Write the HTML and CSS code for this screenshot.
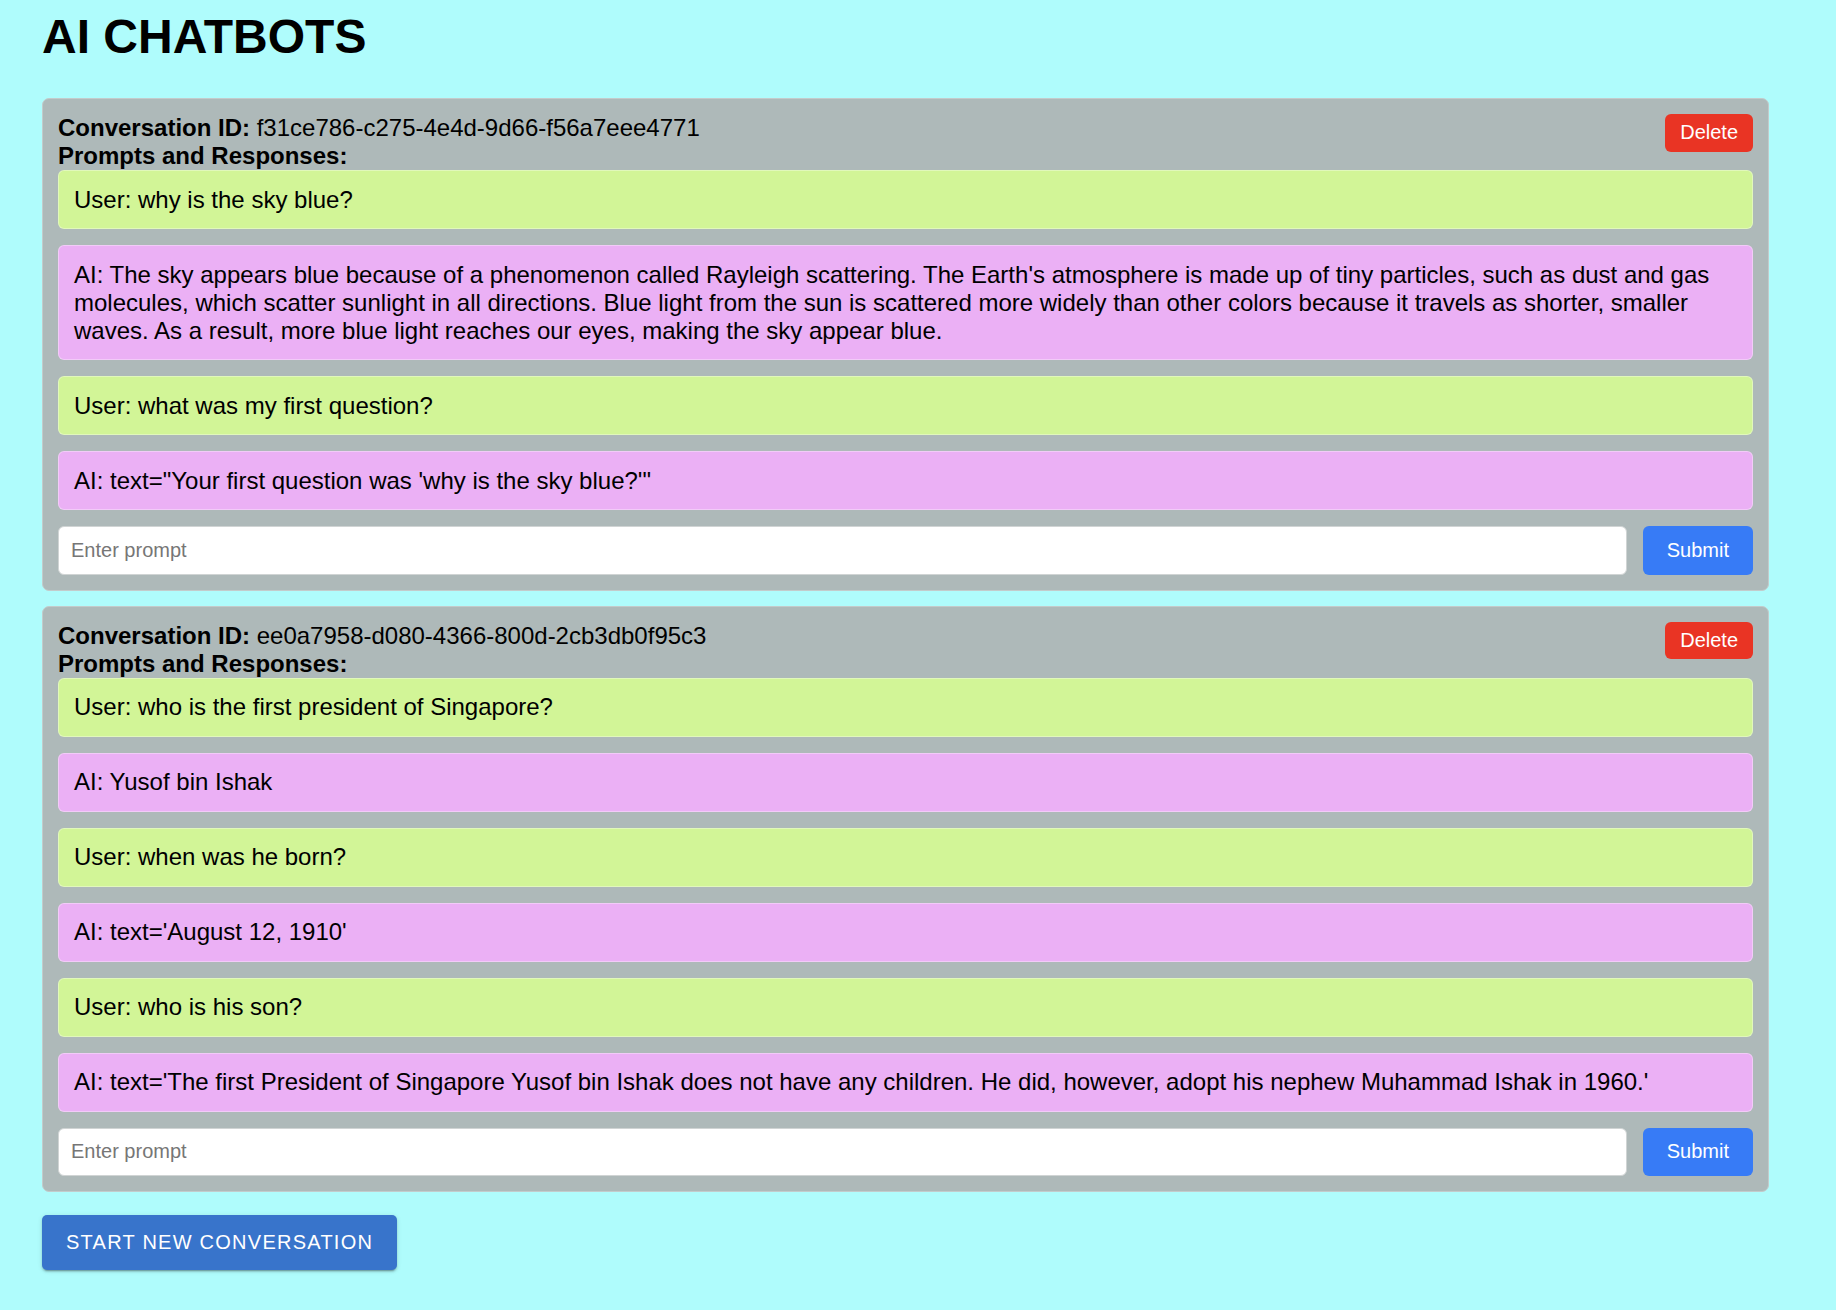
FILE: index.html
```html
<!DOCTYPE html>
<html lang="en">
<head>
<meta charset="utf-8">
<title>AI Chatbots</title>
<link rel="stylesheet" href="styles.css">
</head>
<body>
<main class="page">
  <h1 class="title">AI CHATBOTS</h1>

  <section class="conversation">
    <button class="delete-btn">Delete</button>
    <div class="conv-id"><strong>Conversation ID:</strong> f31ce786-c275-4e4d-9d66-f56a7eee4771</div>
    <div class="conv-label"><strong>Prompts and Responses:</strong></div>
    <div class="messages">
      <div class="msg user">User: why is the sky blue?</div>
      <div class="msg ai">AI: The sky appears blue because of a phenomenon called Rayleigh scattering. The Earth's atmosphere is made up of tiny particles, such as dust and gas molecules, which scatter sunlight in all directions. Blue light from the sun is scattered more widely than other colors because it travels as shorter, smaller waves. As a result, more blue light reaches our eyes, making the sky appear blue.</div>
      <div class="msg user">User: what was my first question?</div>
      <div class="msg ai">AI: text="Your first question was 'why is the sky blue?'"</div>
      <form class="prompt-row">
        <input class="prompt-input" type="text" placeholder="Enter prompt">
        <button class="submit-btn" type="button">Submit</button>
      </form>
    </div>
  </section>

  <section class="conversation">
    <button class="delete-btn">Delete</button>
    <div class="conv-id"><strong>Conversation ID:</strong> ee0a7958-d080-4366-800d-2cb3db0f95c3</div>
    <div class="conv-label"><strong>Prompts and Responses:</strong></div>
    <div class="messages">
      <div class="msg user">User: who is the first president of Singapore?</div>
      <div class="msg ai">AI: Yusof bin Ishak</div>
      <div class="msg user">User: when was he born?</div>
      <div class="msg ai">AI: text='August 12, 1910'</div>
      <div class="msg user">User: who is his son?</div>
      <div class="msg ai">AI: text='The first President of Singapore Yusof bin Ishak does not have any children. He did, however, adopt his nephew Muhammad Ishak in 1960.'</div>
      <form class="prompt-row">
        <input class="prompt-input" type="text" placeholder="Enter prompt">
        <button class="submit-btn" type="button">Submit</button>
      </form>
    </div>
  </section>

  <button class="new-btn">Start new conversation</button>
</main>
</body>
</html>
```

FILE: styles.css
```css
html, body {
  margin: 0;
  padding: 0;
}

body {
  background: #affcfc;
  font-family: "Liberation Sans", Arial, Helvetica, sans-serif;
  color: #000;
  min-height: 1310px;
}

.page {
  display: flex;
  flex-direction: column;
  align-items: stretch;
  padding: 9px 67px 40px 42px;
}

.title {
  margin: 0 0 34px;
  font-size: 48px;
  line-height: 55px;
  font-weight: 700;
}

.conversation {
  background: #aeb9b9;
  border: 1px solid #c3cbcb;
  border-radius: 7px;
  padding: 15px;
  margin-bottom: 15px;
  font-size: 24px;
}

.conversation::after {
  content: "";
  display: block;
  clear: both;
}

.delete-btn {
  float: right;
  font-family: inherit;
  font-size: 20px;
  line-height: 23.7px;
  padding: 7px 15px;
  border: none;
  border-radius: 6px;
  background: #e93424;
  color: #fff;
  cursor: pointer;
}

.conv-id,
.conv-label {
  line-height: 28px;
}

.messages {
  display: flex;
  flex-direction: column;
  gap: 16px;
}

.msg {
  border: 1px solid rgba(255, 255, 255, 0.35);
  border-radius: 6px;
  padding: 14.5px 15px;
  line-height: 28px;
}

.msg.user {
  background: #d2f597;
}

.msg.ai {
  background: #ebb0f5;
}

.prompt-row {
  display: flex;
  gap: 16px;
  margin: 0;
}

.prompt-input {
  flex: 1;
  height: 48.5px;
  box-sizing: border-box;
  border: 1px solid #d0d4d4;
  border-radius: 6px;
  padding: 0 12px;
  font-family: inherit;
  font-size: 20px;
  background: #fff;
  color: #000;
}

.prompt-input::placeholder {
  color: #767676;
}

.submit-btn {
  height: 48.5px;
  padding: 0 24px;
  border: none;
  border-radius: 6px;
  background: #377bf6;
  color: #fff;
  font-family: inherit;
  font-size: 20px;
  cursor: pointer;
}

.new-btn {
  align-self: flex-start;
  margin-top: 8px;
  padding: 10px 24px 10px 24px;
  line-height: 34.7px;
  font-family: inherit;
  font-size: 20px;
  font-weight: 500;
  letter-spacing: 1.25px;
  text-transform: uppercase;
  color: #fff;
  background: #3874cb;
  border: none;
  border-radius: 5px;
  box-shadow: 0 3px 1px -2px rgba(0,0,0,0.2), 0 2px 2px 0 rgba(0,0,0,0.14), 0 1px 5px 0 rgba(0,0,0,0.12);
  cursor: pointer;
}
```
